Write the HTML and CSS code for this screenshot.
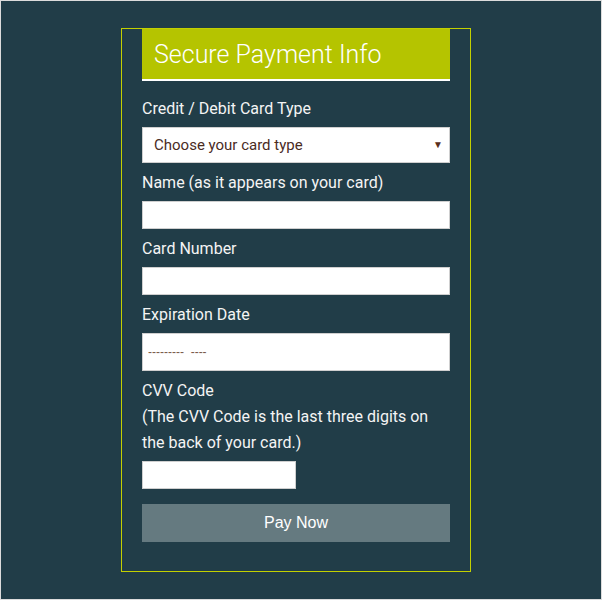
FILE: index.html
```html
<!DOCTYPE html>
<html>
<head>
<meta charset="utf-8">
<title>Secure Payment Info</title>
<link rel="stylesheet" href="styles.css">
</head>
<body>
<div class="page">
  <form class="card">
    <h1 class="title">Secure Payment Info</h1>
    <div class="fields">
      <label class="label label-first">Credit / Debit Card Type</label>
      <div class="select-wrap">
        <select class="select">
          <option>Choose your card type</option>
        </select>
        <span class="arrow">&#9660;</span>
      </div>
      <label class="label">Name (as it appears on your card)</label>
      <input class="input" type="text">
      <label class="label">Card Number</label>
      <input class="input" type="text">
      <label class="label">Expiration Date</label>
      <input class="input input-date" type="text" placeholder="---------  ----">
      <label class="label">CVV Code<br>(The CVV Code is the last three digits on the back of your card.)</label>
      <input class="input input-cvv" type="text">
      <button class="pay" type="button">Pay Now</button>
    </div>
  </form>
</div>
</body>
</html>
```
FILE: styles.css
```css
* { box-sizing: border-box; }
html, body { margin: 0; padding: 0; }
body { font-family: Roboto, "Liberation Sans", sans-serif; }
.page {
  width: 602px;
  height: 600px;
  border: 1px solid #dcdcdc;
  background: #213d48;
  padding: 27px 0 0 120px;
}
.card {
  width: 350px;
  height: 544px;
  border: 1px solid #c2d000;
  padding: 0 20px;
}
.title {
  margin: 0;
  height: 52px;
  background: #b5c400;
  border-bottom: 2px solid #ffffff;
  color: #ffffff;
  font-weight: 300;
  font-size: 25px;
  line-height: 49px;
  padding: 1px 0 0 12px;
}
.fields { display: flex; flex-direction: column; align-items: flex-start; }
.label {
  display: block;
  color: #f4f4f4;
  font-size: 16px;
  font-weight: 400;
  line-height: 26px;
  margin-top: 7px;
  margin-bottom: 5px;
}
.label-first { margin-top: 15px; }
.select-wrap { position: relative; width: 308px; }
.select {
  display: block;
  width: 308px;
  height: 36px;
  appearance: none;
  -webkit-appearance: none;
  border: 1px solid #cfcfcf;
  border-radius: 0;
  background: #ffffff;
  color: #4a2c1f;
  font-family: Roboto, sans-serif;
  font-size: 15px;
  padding: 0 11px;
}
.arrow {
  position: absolute;
  right: 7px;
  top: 12px;
  font-size: 10px;
  color: #5a2f1a;
}
.input {
  display: block;
  width: 308px;
  height: 28px;
  border: 1px solid #cfcfcf;
  border-radius: 0;
  background: #ffffff;
  padding: 0 5px;
}
.input-date {
  height: 38px;
  font-family: "Liberation Sans", Arial, sans-serif;
  font-size: 12px;
  white-space: pre;
}
.input-date::placeholder { color: #7a5a4a; }
.input-cvv { width: 154px; }
.pay {
  margin-top: 15px;
  width: 308px;
  height: 38px;
  border: none;
  border-radius: 0;
  background: #657a80;
  color: #ffffff;
  font-family: "Liberation Sans", Arial, sans-serif;
  font-size: 16px;
}
```
